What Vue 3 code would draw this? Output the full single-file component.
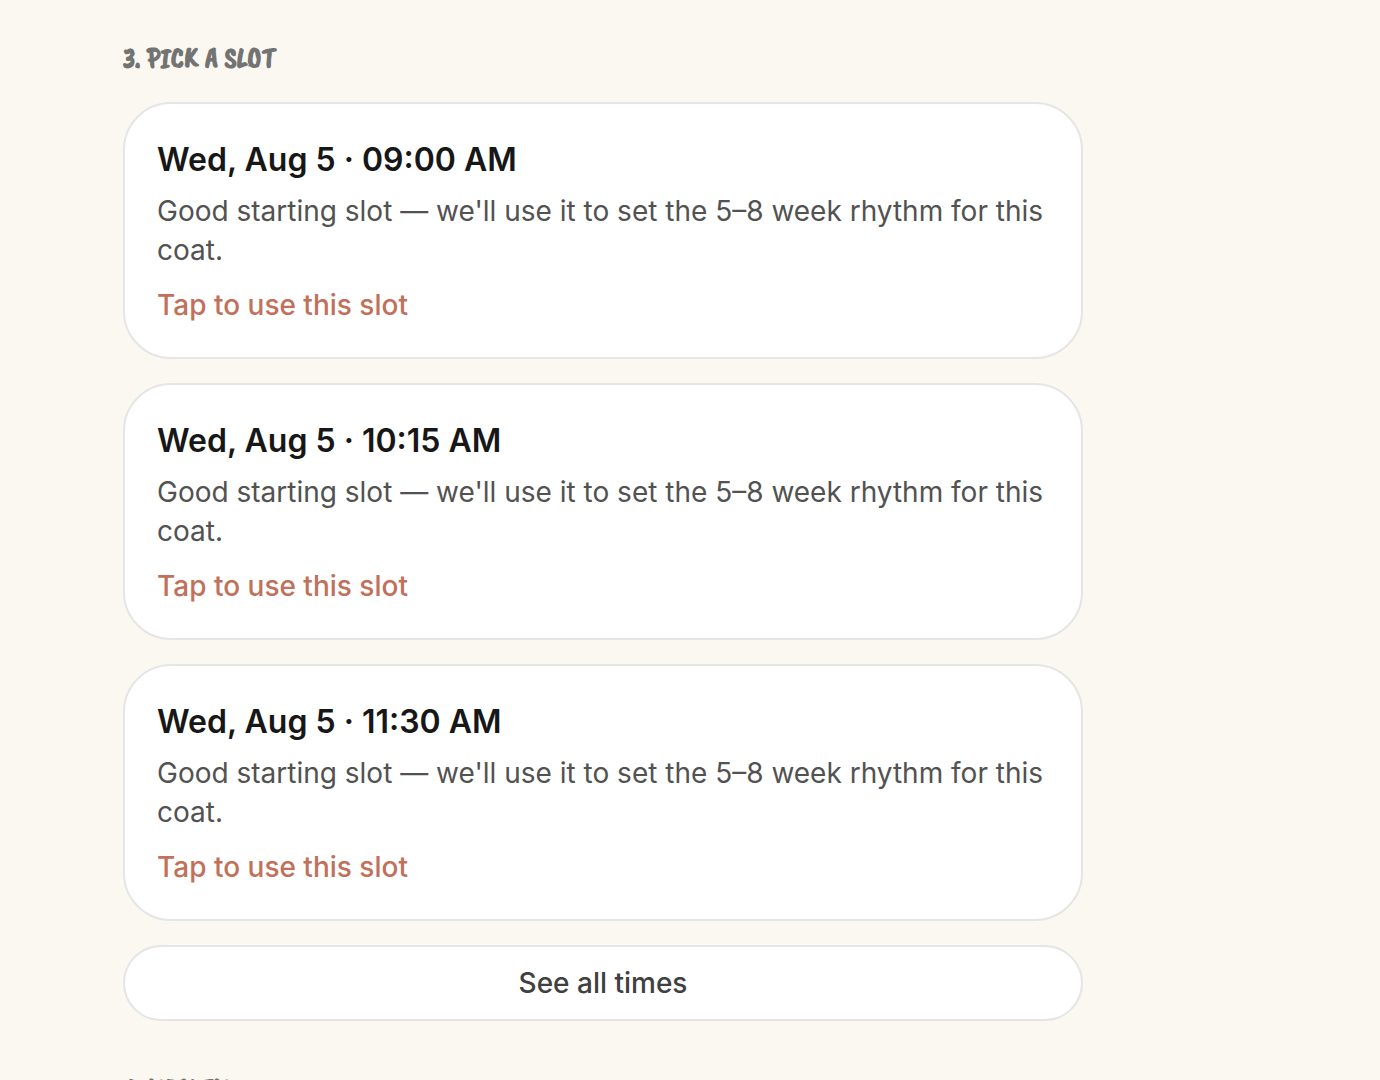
<script setup>
const note = "Good starting slot — we'll use it to set the 5–8 week rhythm for this coat."
const slots = [
  { id: 1, day: 'Wed, Aug 5', time: '09:00 AM' },
  { id: 2, day: 'Wed, Aug 5', time: '10:15 AM' },
  { id: 3, day: 'Wed, Aug 5', time: '11:30 AM' },
]
</script>

<template>
  <main class="booking">
    <section class="step">
      <h2 class="step-title">3. PICK A SLOT</h2>
      <div class="slots">
        <button v-for="slot in slots" :key="slot.id" type="button" class="slot">
          <span class="slot-time">{{ slot.day }} · {{ slot.time }}</span>
          <span class="slot-note">{{ note }}</span>
          <span class="slot-action">Tap to use this slot</span>
        </button>
        <button type="button" class="all-times">See all times</button>
      </div>
    </section>
    <section class="step">
      <h2 class="step-title">4. HEALTH</h2>
    </section>
  </main>
</template>

<style>
html,
body {
  background: #fbf8f1;
}

body {
  height: 100vh;
  overflow: hidden;
}
</style>

<style scoped>
.booking {
  box-sizing: border-box;
  max-width: 1083px;
  padding: 38px 0 0 123px;
  display: flex;
  flex-direction: column;
  gap: 48px;
  font-family: Inter, "Liberation Sans", sans-serif;
}

.step {
  display: flex;
  flex-direction: column;
  gap: 24px;
}

.step-title {
  margin: 0;
  font-family: "Caveat Brush", "Open Sans", sans-serif;
  font-size: 29px;
  font-weight: 700;
  line-height: 40px;
  color: #737373;
}

.slots {
  display: flex;
  flex-direction: column;
  gap: 24px;
}

.slot,
.all-times {
  border: 2px solid #e5e5e5;
  background: #ffffff;
  font-family: inherit;
  font-size: 28px;
  cursor: pointer;
}

.slot {
  display: flex;
  flex-direction: column;
  align-items: flex-start;
  padding: 32px;
  border-radius: 48px;
  line-height: 39px;
  text-align: left;
}

.slot-time {
  margin-bottom: 8px;
  font-size: 32px;
  font-weight: 600;
  line-height: 48px;
  color: #171717;
}

.slot-note {
  margin-bottom: 16px;
  color: #525252;
}

.slot-action {
  font-weight: 500;
  color: #c1705a;
}

.all-times {
  padding: 16px 32px;
  border-radius: 38px;
  font-weight: 500;
  line-height: 40px;
  color: #404040;
}
</style>
